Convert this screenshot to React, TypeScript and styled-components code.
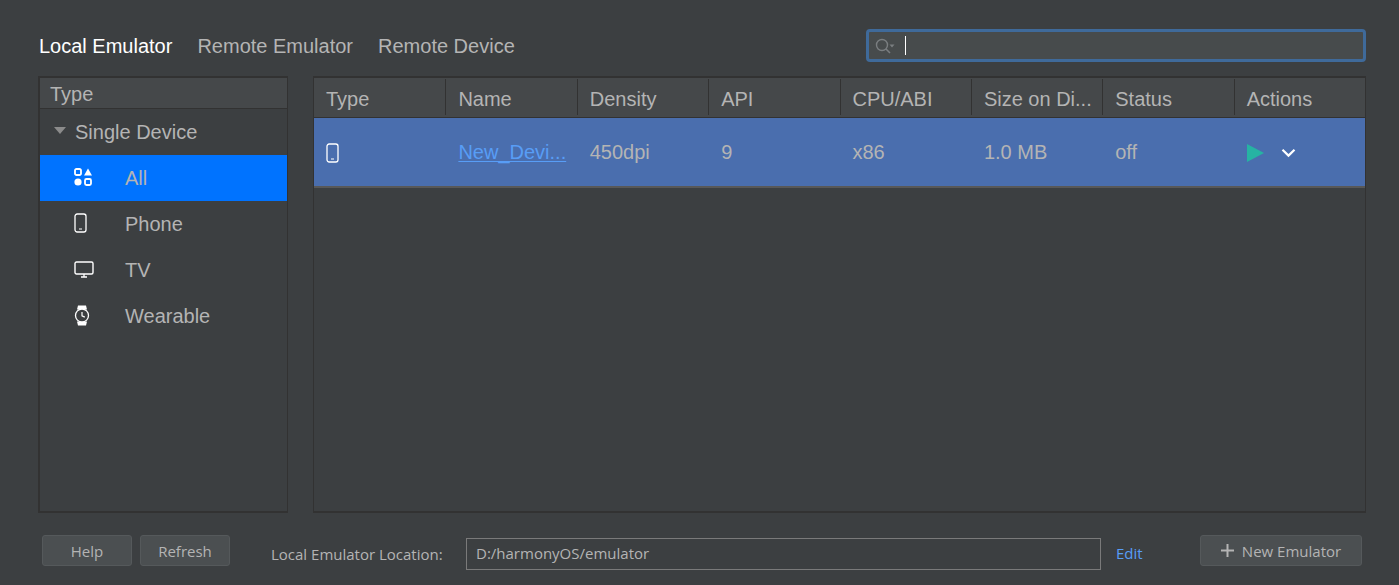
import styled, { createGlobalStyle } from "styled-components";

const GlobalStyle = createGlobalStyle`
    html, body {
        margin: 0;
        padding: 0;
        background-color: #3c3f41;
    }
`;

const Page = styled.div`
    width: 1399px;
    height: 585px;
    box-sizing: border-box;
    padding: 29px 33px 0 38px;
    background-color: #3c3f41;
    color: #b4b4b4;
    font-family: "Liberation Sans", Arial, sans-serif;
    font-size: 20px;
    overflow: hidden;
`;

// Tabs on the left, search field on the right
const TopBar = styled.div`
    display: flex;
    justify-content: space-between;
    height: 33px;
    margin-bottom: 14px;
`;

const Tabs = styled.div`
    display: flex;
    align-items: center;
    gap: 25px;
    padding-left: 1px;
`;

const Tab = styled.span<{ $active?: boolean }>`
    color: ${(p) => (p.$active ? "#ffffff" : "#b4b4b4")};
    line-height: 36px;
`;

const SearchBox = styled.div`
    width: 500px;
    height: 33px;
    box-sizing: border-box;
    border: 3px solid #3f6a9a;
    border-radius: 4px;
    background-color: #474b4c;
    display: flex;
    align-items: center;
    padding-left: 5px;
`;

const Caret = styled.div`
    width: 1px;
    height: 19px;
    margin-left: 9px;
    background-color: #ffffff;
`;

const Main = styled.div`
    display: flex;
    gap: 25px;
    height: 437px;
`;

const Panel = styled.div<{ $width: number }>`
    width: ${(p) => p.$width}px;
    box-sizing: border-box;
    border: 2px solid #323232;
    border-right-width: 1px;
    border-left-width: ${(p) => (p.$width > 500 ? 1 : 2)}px;
`;

const SideHeader = styled.div`
    height: 31px;
    box-sizing: border-box;
    padding-left: 10px;
    line-height: 33px;
    background-color: #45484a;
    border-bottom: 1px solid #323232;
`;

const GroupRow = styled.div`
    height: 46px;
    display: flex;
    align-items: center;
    padding-left: 14px;
    gap: 9px;
`;

const Triangle = styled.div`
    width: 0;
    height: 0;
    border-left: 6px solid transparent;
    border-right: 6px solid transparent;
    border-top: 7px solid #8b8b8b;
    margin-bottom: 3px;
`;

const SideItem = styled.div<{ $selected?: boolean }>`
    height: 46px;
    display: flex;
    align-items: center;
    background-color: ${(p) => (p.$selected ? "#0073ff" : "transparent")};
`;

const SideIcon = styled.div`
    width: 85px;
    padding-left: 34px;
    box-sizing: border-box;
    display: flex;
    align-items: center;
    flex-shrink: 0;
    margin-top: -2px;
`;

const SideLabel = styled.span`
    line-height: 46px;
`;

const HeaderRow = styled.div`
    display: grid;
    grid-template-columns: repeat(8, 1fr);
    height: 40px;
    box-sizing: border-box;
    background-color: #45484a;
    border-bottom: 1px solid #323232;
`;

const HeaderCell = styled.div<{ $first?: boolean }>`
    padding-left: ${(p) => (p.$first ? 12 : 12)}px;
    line-height: 41px;
    height: 36px;
    margin-top: 1px;
    border-left: ${(p) => (p.$first ? "none" : "1px solid #323232")};
    white-space: nowrap;
    overflow: hidden;
`;

const DataRow = styled.div`
    display: grid;
    grid-template-columns: repeat(8, 1fr);
    height: 70px;
    box-sizing: border-box;
    background-color: #4a6eae;
    border-bottom: 2px solid #585858;
    align-items: center;
`;

const DataCell = styled.div<{ $first?: boolean }>`
    padding-left: ${(p) => (p.$first ? 12 : 13)}px;
    display: flex;
    align-items: center;
    white-space: nowrap;
    margin-top: 1px;
`;

const DeviceLink = styled.a`
    color: #589df6;
    text-decoration: underline;
    text-underline-offset: 2px;
    text-decoration-thickness: 1px;
`;

const Actions = styled.div`
    display: flex;
    align-items: center;
    gap: 17px;
`;

const Footer = styled.div`
    display: flex;
    align-items: flex-start;
    margin-top: 22px;
    padding-left: 4px;
    padding-right: 4px;
    font-family: "Open Sans", "Noto Sans", sans-serif;
    font-size: 15px;
`;

const Button = styled.button<{ $width: number }>`
    width: ${(p) => p.$width}px;
    height: 31px;
    box-sizing: border-box;
    margin: 0 8px 0 0;
    padding: 0;
    display: flex;
    align-items: center;
    justify-content: center;
    gap: 8px;
    border: 1px solid #55595b;
    border-radius: 3px;
    background-color: #4b4f51;
    color: #b4b4b4;
    font: inherit;
`;

const LocationLabel = styled.span`
    margin-left: 33px;
    margin-top: 7px;
    width: 195px;
    line-height: 24px;
    white-space: nowrap;
`;

const LocationInput = styled.div`
    width: 635px;
    height: 32px;
    margin-top: 3px;
    box-sizing: border-box;
    border: 1px solid #7a7a7a;
    padding-left: 9px;
    line-height: 29px;
`;

const EditLink = styled.a`
    margin-left: 15px;
    margin-top: 6px;
    line-height: 24px;
    color: #589df6;
`;

const FooterSpacer = styled.div`
    flex: 1;
`;

const columns = ["Type", "Name", "Density", "API", "CPU/ABI", "Size on Di...", "Status", "Actions"];

const SearchIcon = () => (
    <svg width="22" height="18" viewBox="0 0 22 18" fill="none">
        <circle cx="8" cy="8" r="5.5" stroke="#7a7e80" strokeWidth="1.4" />
        <path d="M12 12l4 4" stroke="#7a7e80" strokeWidth="1.6" />
        <path d="M15.5 7.5h5l-2.5 3z" fill="#7a7e80" />
    </svg>
);

const AllIcon = () => (
    <svg width="18" height="18" viewBox="0 0 18 18" fill="none">
        <rect x="1" y="1" width="6" height="6" rx="1.5" stroke="#fff" strokeWidth="1.8" />
        <path d="M14 0.5l4 7h-8z" fill="#fff" />
        <circle cx="4" cy="14" r="3.6" fill="#fff" />
        <rect x="11" y="11" width="6" height="6" rx="1.5" stroke="#fff" strokeWidth="1.8" />
    </svg>
);

const PhoneIcon = () => (
    <svg width="13" height="20" viewBox="0 0 13 20" fill="none">
        <rect x="1" y="1" width="11" height="18" rx="2.2" stroke="#fff" strokeWidth="1.3" />
        <path d="M5 16h3" stroke="#fff" strokeWidth="1" />
    </svg>
);

const TvIcon = () => (
    <svg width="20" height="17" viewBox="0 0 20 17" fill="none">
        <rect x="1" y="1" width="18" height="12" rx="1.5" stroke="#fff" strokeWidth="1.4" />
        <path d="M10 13v3M7 16h6" stroke="#fff" strokeWidth="1.3" />
    </svg>
);

const WatchIcon = () => (
    <svg width="16" height="21" viewBox="0 0 16 21" fill="none">
        <path d="M4 0.5h8l1 4H3zM3 16.5h10l-1 4H4z" fill="#fff" />
        <circle cx="8" cy="10.5" r="6.5" fill="#3c3f41" stroke="#fff" strokeWidth="1.3" />
        <path d="M8 7v3.8l2.8 1.3" stroke="#fff" strokeWidth="1.2" />
    </svg>
);

const PlayIcon = () => (
    <svg width="17" height="18" viewBox="0 0 17 18">
        <path d="M0 0l17 9L0 18z" fill="#26b3a3" />
    </svg>
);

const ChevronIcon = () => (
    <svg width="15" height="10" viewBox="0 0 15 10" fill="none">
        <path d="M1.5 1.8L7.5 7.6l6-5.8" stroke="#fff" strokeWidth="2.2" />
    </svg>
);

const PlusIcon = () => (
    <svg width="13" height="13" viewBox="0 0 13 13">
        <path d="M5.5 0h2v5.5H13v2H7.5V13h-2V7.5H0v-2h5.5z" fill="#b4b4b4" />
    </svg>
);

export default function App() {
    return (
        <>
            <GlobalStyle />
            <Page>
                <TopBar>
                    <Tabs>
                        <Tab $active>Local Emulator</Tab>
                        <Tab>Remote Emulator</Tab>
                        <Tab>Remote Device</Tab>
                    </Tabs>
                    <SearchBox>
                        <SearchIcon />
                        <Caret />
                    </SearchBox>
                </TopBar>
                <Main>
                    <Panel $width={250}>
                        <SideHeader>Type</SideHeader>
                        <GroupRow>
                            <Triangle />
                            <span>Single Device</span>
                        </GroupRow>
                        <SideItem $selected>
                            <SideIcon><AllIcon /></SideIcon>
                            <SideLabel>All</SideLabel>
                        </SideItem>
                        <SideItem>
                            <SideIcon><PhoneIcon /></SideIcon>
                            <SideLabel>Phone</SideLabel>
                        </SideItem>
                        <SideItem>
                            <SideIcon><TvIcon /></SideIcon>
                            <SideLabel>TV</SideLabel>
                        </SideItem>
                        <SideItem>
                            <SideIcon><WatchIcon /></SideIcon>
                            <SideLabel>Wearable</SideLabel>
                        </SideItem>
                    </Panel>
                    <Panel $width={1053}>
                        <HeaderRow>
                            {columns.map((name, i) => (
                                <HeaderCell key={name} $first={i === 0}>{name}</HeaderCell>
                            ))}
                        </HeaderRow>
                        <DataRow>
                            <DataCell $first><PhoneIcon /></DataCell>
                            <DataCell><DeviceLink>New_Devi...</DeviceLink></DataCell>
                            <DataCell>450dpi</DataCell>
                            <DataCell>9</DataCell>
                            <DataCell>x86</DataCell>
                            <DataCell>1.0 MB</DataCell>
                            <DataCell>off</DataCell>
                            <DataCell>
                                <Actions>
                                    <PlayIcon />
                                    <ChevronIcon />
                                </Actions>
                            </DataCell>
                        </DataRow>
                    </Panel>
                </Main>
                <Footer>
                    <Button $width={90}>Help</Button>
                    <Button $width={90}>Refresh</Button>
                    <LocationLabel>Local Emulator Location:</LocationLabel>
                    <LocationInput>D:/harmonyOS/emulator</LocationInput>
                    <EditLink>Edit</EditLink>
                    <FooterSpacer />
                    <Button $width={162} style={{ marginRight: 0 }}><PlusIcon />New Emulator</Button>
                </Footer>
            </Page>
        </>
    );
}
